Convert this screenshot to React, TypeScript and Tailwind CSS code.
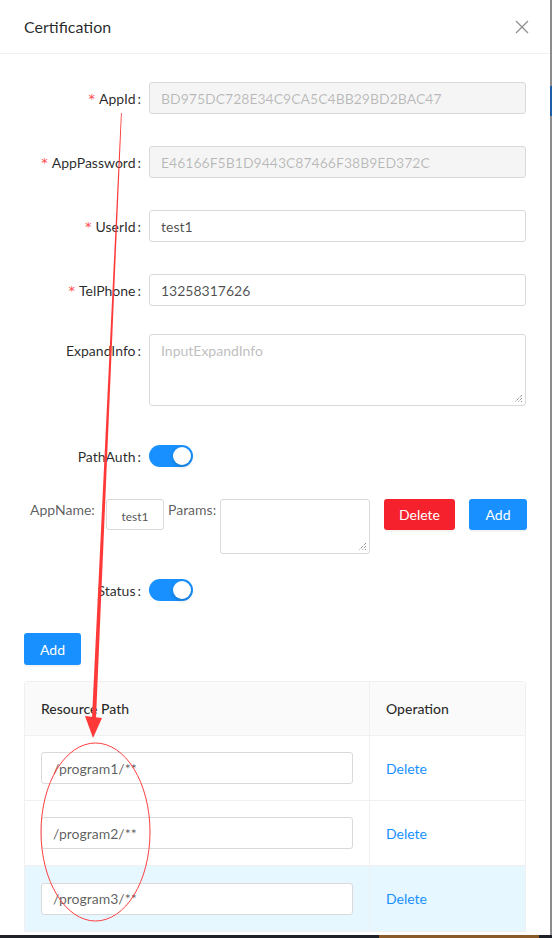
import React from 'react';

const font = { fontFamily: 'Lato, "Noto Sans", Arial, sans-serif' };

function Label({ text, required }: { text: string; required?: boolean }) {
  return (
    <div className="w-[125px] shrink-0 h-8 flex items-center justify-end text-[14px] text-[rgba(0,0,0,0.85)]">
      {required && (
        <span className="text-[#ff4d4f] mr-1 text-[13px] leading-none" style={{ fontFamily: '"DejaVu Sans", sans-serif' }}>
          *
        </span>
      )}
      <span>{text}</span>
      <span className="ml-[2px] mr-2">:</span>
    </div>
  );
}

function Switch() {
  return (
    <div className="w-[44px] h-[22px] rounded-full bg-[#1890ff] relative">
      <div className="absolute right-[2px] top-[2px] w-[18px] h-[18px] rounded-full bg-white shadow-[0_2px_4px_rgba(0,35,11,0.2)]" />
    </div>
  );
}

function Resize() {
  return (
    <svg className="absolute right-[2px] bottom-[2px]" width="9" height="9" viewBox="0 0 9 9">
      <path d="M8 1L1 8M8 4L4 8M8 7L7 8" stroke="#666" strokeWidth="1" strokeDasharray="1 1" />
    </svg>
  );
}

const rows = ['/program1/**', '/program2/**', '/program3/**'];

export default function App() {
  return (
    <div className="relative w-[552px] h-[938px] overflow-hidden bg-white" style={font}>
      <div className="flex h-[935px]">
        <div className="w-[550px] bg-white flex flex-col">
          <div className="h-[54px] px-6 flex items-center justify-between border-b border-[#f0f0f0]">
            <span className="text-[16px] text-[rgba(0,0,0,0.85)]">Certification</span>
            <svg width="14" height="14" viewBox="0 0 14 14" className="mr-[-3px]">
              <path d="M1 1L13 13M13 1L1 13" stroke="rgba(0,0,0,0.45)" strokeWidth="1.2" />
            </svg>
          </div>

          <div className="px-6 pt-[28px]">
            <div className="flex">
              <Label text="AppId" required />
              <div className="flex-1 h-8 px-[11px] flex items-center border border-[#d9d9d9] rounded-[3px] bg-[#f5f5f5] text-[14px] text-[rgba(0,0,0,0.25)]">
                BD975DC728E34C9CA5C4BB29BD2BAC47
              </div>
            </div>
            <div className="flex mt-8">
              <Label text="AppPassword" required />
              <div className="flex-1 h-8 px-[11px] flex items-center border border-[#d9d9d9] rounded-[3px] bg-[#f5f5f5] text-[14px] text-[rgba(0,0,0,0.25)]">
                E46166F5B1D9443C87466F38B9ED372C
              </div>
            </div>
            <div className="flex mt-8">
              <Label text="UserId" required />
              <div className="flex-1 h-8 px-[11px] flex items-center border border-[#d9d9d9] rounded-[3px] text-[14px] text-[rgba(0,0,0,0.7)]">
                test1
              </div>
            </div>
            <div className="flex mt-8">
              <Label text="TelPhone" required />
              <div className="flex-1 h-8 px-[11px] flex items-center border border-[#d9d9d9] rounded-[3px] text-[14px] text-[rgba(0,0,0,0.7)]">
                13258317626
              </div>
            </div>
            <div className="flex mt-[28px]">
              <Label text="ExpandInfo" />
              <div className="relative flex-1 h-[72px] px-[11px] py-[5px] border border-[#d9d9d9] rounded-[3px] text-[14px] text-[#bfbfbf]">
                InputExpandInfo
                <Resize />
              </div>
            </div>
            <div className="flex mt-[34px]">
              <Label text="PathAuth" />
              <div className="h-8 flex items-center">
                <Switch />
              </div>
            </div>
          </div>

          <div className="flex items-start mt-[27px] pl-[30px] text-[14px] text-[rgba(0,0,0,0.65)]">
            <span className="w-[76px] h-[22px] leading-[22px]">AppName:</span>
            <div className="w-[58px] h-[31px] border border-[#d9d9d9] rounded-[3px] flex items-center justify-center pt-[4px] text-[12px] text-[rgba(0,0,0,0.7)]">
              test1
            </div>
            <span className="w-[56px] pl-[4px] h-[22px] leading-[22px]">Params:</span>
            <div className="relative w-[150px] h-[55px] border border-[#d9d9d9] rounded-[3px]">
              <Resize />
            </div>
            <div className="ml-[14px] w-[71px] h-[31px] rounded-[3px] bg-[#f5222d] text-white flex items-center justify-center text-[14px] shadow-[0_2px_0_rgba(0,0,0,0.045)]">
              Delete
            </div>
            <div className="ml-[14px] w-[58px] h-[31px] rounded-[3px] bg-[#1890ff] text-white flex items-center justify-center text-[14px] shadow-[0_2px_0_rgba(0,0,0,0.045)]">
              Add
            </div>
          </div>

          <div className="px-6">
            <div className="flex mt-[20px]">
              <Label text="Status" />
              <div className="h-8 flex items-center">
                <Switch />
              </div>
            </div>

            <div className="mt-[27px] w-[57px] h-8 rounded-[3px] bg-[#1890ff] text-white flex items-center justify-center text-[14px] shadow-[0_2px_0_rgba(0,0,0,0.045)]">
              Add
            </div>

            <div className="mt-4 border border-[#f0f0f0] rounded-t-[3px] text-[14px]">
              <div className="flex h-[54px] bg-[#fafafa] border-b border-[#f0f0f0] font-medium text-[rgba(0,0,0,0.85)]">
                <div className="w-[345px] px-4 flex items-center border-r border-[#f0f0f0]">Resource Path</div>
                <div className="flex-1 px-4 flex items-center">Operation</div>
              </div>
              {rows.map((r, i) => (
                <div
                  key={r}
                  className={`flex h-[65px] ${i < rows.length - 1 ? 'border-b border-[#f0f0f0]' : ''} ${i === 2 ? 'bg-[#e6f7ff]' : ''}`}
                >
                  <div className="w-[345px] px-4 flex items-center border-r border-[#f0f0f0]">
                    <div className="w-full h-8 px-[11px] flex items-center bg-white border border-[#d9d9d9] rounded-[3px] text-[rgba(0,0,0,0.65)]">
                      {r}
                    </div>
                  </div>
                  <div className="flex-1 px-4 flex items-center text-[#1890ff]">Delete</div>
                </div>
              ))}
            </div>
          </div>
        </div>
        <div className="w-[2px] bg-[#8c8c8c] flex flex-col">
          <div className="h-[86px]" />
          <div className="h-[30px] bg-[#1f5fa8]" />
        </div>
      </div>
      <div className="flex h-[3px] bg-[#1f2329]">
        <div className="w-[379px]" />
        <div className="w-[160px] bg-[#8a5a2b]" />
      </div>

      <svg className="absolute inset-0 pointer-events-none" width="552" height="938" viewBox="0 0 552 938">
        <polygon points="121,113 121.8,113 96,718 92,718" fill="#ff3838" />
        <polygon points="85,716 102,718 93,738" fill="#ff3838" />
        <ellipse cx="95.5" cy="832" rx="54.5" ry="89" fill="none" stroke="#ff4040" strokeWidth="1" />
      </svg>
    </div>
  );
}
